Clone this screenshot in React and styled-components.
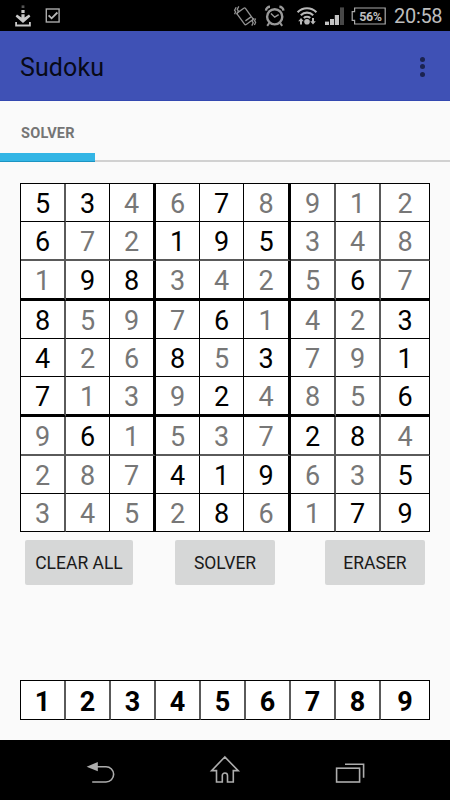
import React from "react";
import styled, { createGlobalStyle } from "styled-components";

//Board data: digits of the row, then a mask of the given cells
const board = [
    ["534678912", "110010000"],
    ["672195348", "100111000"],
    ["198342567", "011000010"],
    ["859761423", "100010001"],
    ["426853791", "100101001"],
    ["713924856", "100010001"],
    ["961537284", "010000110"],
    ["287419635", "000111001"],
    ["345286179", "000010011"],
];

const thin = "1px solid #000";
const soft = "2px solid #5a5a5a";
const thick = "3px solid #000";

//Line drawn after each column and row
const columnLines = [soft, thin, thick, thin, thin, thick, soft, soft, thin];
const rowLines = [thin, soft, thick, thin, thin, thick, soft, thin, thin];

const App = () => {
    return (
        <Screen>
            <GlobalStyle />
            <StatusBar />
            <AppBar>
                <Title>Sudoku</Title>
                <Menu>
                    <Dot />
                    <Dot />
                    <Dot />
                </Menu>
            </AppBar>
            <Tabs>
                <Tab>SOLVER</Tab>
            </Tabs>
            <Content>
                <Board>
                    {board.map(([digits, given], row) =>
                        digits.split("").map((digit, col) => (
                            <Cell
                                key={`${row}-${col}`}
                                $given={given[col] === "1"}
                                $right={columnLines[col]}
                                $bottom={rowLines[row]}
                            >
                                {digit}
                            </Cell>
                        ))
                    )}
                </Board>
                <Actions>
                    <Button $width={108}>CLEAR ALL</Button>
                    <Button>SOLVER</Button>
                    <Button>ERASER</Button>
                </Actions>
                <Palette>
                    {"123456789".split("").map((digit) => (
                        <Key key={digit} $right={digit === "9" ? thin : soft}>{digit}</Key>
                    ))}
                </Palette>
            </Content>
            <NavBar />
        </Screen>
    );
};

const StatusBar = () => (
    <Status>
        <svg width="390" height="31" viewBox="0 0 390 31" fill="none" stroke="#b8b8b8">
            {/* download */}
            <g stroke="none" fill="#c8c8c8">
                <rect x="21.6" y="5.4" width="2.8" height="2.6" fill="#555" />
                <rect x="21.4" y="10" width="3.2" height="3" />
                <path d="M21.4 14.2h3.2v3.4l4.4-3 1.4 1.8-7.4 6.7-7.4-6.7 1.4-1.8 4.4 3z" />
                <path d="M15.2 22h1.8v2.4h12V22h1.8v4.5H15.2z" />
            </g>
            {/* checkbox */}
            <rect x="46.3" y="9" width="12.8" height="13" strokeWidth="1.4" stroke="#aaa" />
            <path d="M48.6 15.3l3 3 5.8-5.8" strokeWidth="1.8" />
            {/* vibrate */}
            <g stroke="#929292" strokeWidth="1.3">
                <rect x="240" y="9" width="10" height="14.6" rx="1.2" transform="rotate(-36 245 16.3)" />
                <path d="M245.4 20.9l5.6-4" />
                <path d="M238.8 6.4l-1.6 3 1.2 1.6-1.8 3.4M236.2 7.2l-1.6 3 1 1.6-1 2.4" />
                <path d="M251.8 25.6l1.4-2.8-1-1.6 1.8-3M254.4 25l1.2-2.6-1-1.6 1-2.4" />
            </g>
            {/* alarm */}
            <g stroke="#999">
                <circle cx="274.7" cy="16.8" r="7.6" strokeWidth="2.4" />
                <path d="M271 13.6l3.7 3.6 4-2.6" strokeWidth="1.4" />
                <path d="M266 10.6a4 4 0 0 1 4-3.8M279.4 6.8a4 4 0 0 1 4 3.8" strokeWidth="2.4" />
                <path d="M269.2 23.2l-2 2.6M280.2 23.2l2 2.6" strokeWidth="2" />
            </g>
            {/* wifi */}
            <path d="M297.6 12.2a13 13 0 0 1 18.8 0M300.8 15.2a8.8 8.8 0 0 1 12.4 0M303.8 18a4.8 4.8 0 0 1 6.4 0" strokeWidth="2.1" />
            <circle cx="307" cy="21.8" r="2.8" fill="#b8b8b8" stroke="none" />
            <path d="M301 18l-2.8 3.2h1.8v3.2h2v-3.2h1.8zM313 24.4l-2.8-3.2h1.8V18h2v3.2h1.8z" fill="#b8b8b8" stroke="none" />
            {/* signal */}
            <g stroke="none" fill="#c4c4c4">
                <rect x="325" y="21.6" width="4" height="3.4" />
                <rect x="330" y="19" width="4" height="6" />
                <rect x="334.8" y="15" width="4.2" height="10" />
                <rect x="340" y="7.4" width="4" height="17.6" fill="#484848" />
            </g>
            {/* battery */}
            <path d="M354.6 8h30.6v16h-30.6v-3.6h-2.4v-8.8h2.4z" strokeWidth="1.2" stroke="#aaa" />
            <Percent x="359.2" y="20.8">56%</Percent>
        </svg>
        <Time>20:58</Time>
    </Status>
);

const NavBar = () => (
    <Nav>
        <svg width="450" height="60" viewBox="0 0 450 60" fill="none" stroke="#adadad" strokeWidth="1.6">
            <path d="M86.6 26.7l11.2-4.6v9.2z" fill="#adadad" stroke="none" />
            <path d="M97 26.7h9a7.65 7.65 0 0 1 0 15.3H92.2" />
            <path d="M224.8 17l-13.2 13.6h4.9V42h5.8v-6.4a2.6 2.6 0 0 1 5.2 0V42h5.8V30.6h4.9z" />
            <rect x="336.6" y="28.2" width="23" height="13.8" />
            <path d="M345 24.2h18.6v13.6" />
        </svg>
    </Nav>
);

const GlobalStyle = createGlobalStyle`
    *{
        box-sizing: border-box;
    }
    body{
        margin: 0;
        background: #fafafa;
        font-family: Roboto, sans-serif;
    }
    svg{
        display: block;
    }
`;

const Screen = styled.div`
    display: flex;
    flex-direction: column;
    width: 450px;
    height: 800px;
    background: #fafafa;
    overflow: hidden;
`;

const Status = styled.div`
    display: flex;
    height: 31px;
    background: #000;
`;

const Percent = styled.text`
    font-family: Roboto, sans-serif;
    font-size: 12.5px;
    font-weight: 700;
    letter-spacing: -0.4px;
    fill: #bdbdbd;
    stroke: none;
`;

const Time = styled.span`
    padding: 4px 0 0 4px;
    font-size: 20px;
    line-height: 25px;
    letter-spacing: -0.3px;
    color: #bdbdbd;
`;

const AppBar = styled.header`
    display: flex;
    align-items: center;
    justify-content: space-between;
    height: 70px;
    padding: 2px 25px 0 20px;
    background: #3f51b5;
    border-bottom: 1px solid #3448b0;
`;

const Title = styled.h1`
    margin: 0;
    padding-top: 2px;
    font-size: 25px;
    font-weight: 400;
    letter-spacing: 0.1px;
    color: #080a17;
`;

const Menu = styled.div`
    display: flex;
    flex-direction: column;
    gap: 2.5px;
`;

const Dot = styled.span`
    width: 5px;
    height: 5px;
    border-radius: 50%;
    background: #1b2350;
`;

const Tabs = styled.nav`
    height: 61px;
    background: linear-gradient(#d1d1d1, #d1d1d1) bottom / 100% 2px no-repeat;
`;

const Tab = styled.div`
    width: 95px;
    height: 61px;
    padding: 2px 0 0 21px;
    font-size: 14.5px;
    font-weight: 700;
    line-height: 61px;
    letter-spacing: 0.25px;
    color: #757575;
    background:
        linear-gradient(#1c94c2, #1c94c2) bottom / 100% 1px no-repeat,
        linear-gradient(#33b5e5, #33b5e5) bottom / 100% 9px no-repeat;
`;

const Content = styled.main`
    display: flex;
    flex-direction: column;
    height: 578px;
    padding: 21px 20px 20px;
`;

const Board = styled.div`
    display: grid;
    grid-template-columns: 45px 44px 46px 44px 44px 47px 45px 45px 49px;
    grid-template-rows: 38px 39px 40px 38px 38px 40px 39px 38px 38px;
    border-left: ${thin};
    border-top: ${thin};
`;

const Cell = styled.div`
    display: flex;
    align-items: center;
    justify-content: center;
    padding-top: 3px;
    border-right: ${({ $right }) => $right};
    border-bottom: ${({ $bottom }) => $bottom};
    background: #fff;
    font-size: 27px;
    line-height: 32px;
    color: ${({ $given }) => ($given ? "#000" : "#777")};
`;

const Actions = styled.div`
    display: grid;
    grid-template-columns: 150px 150px 100px;
    padding: 8px 5px 0;
`;

const Button = styled.button`
    width: ${({ $width }) => $width || 100}px;
    height: 45px;
    padding: 0;
    border: 0;
    border-radius: 2px;
    background: #d6d7d7;
    font-family: inherit;
    font-size: 17.5px;
    color: #1a1a1a;
`;

const Palette = styled.div`
    display: grid;
    grid-template-columns: 45px repeat(7, 45px) 49px;
    height: 40px;
    margin-top: auto;
    border-left: ${thin};
    border-top: ${thin};
`;

const Key = styled(Cell).attrs({ $given: true, $bottom: thin })`
    font-weight: 700;
`;

const Nav = styled.footer`
    height: 60px;
    background: #000;
`;

export default App;
